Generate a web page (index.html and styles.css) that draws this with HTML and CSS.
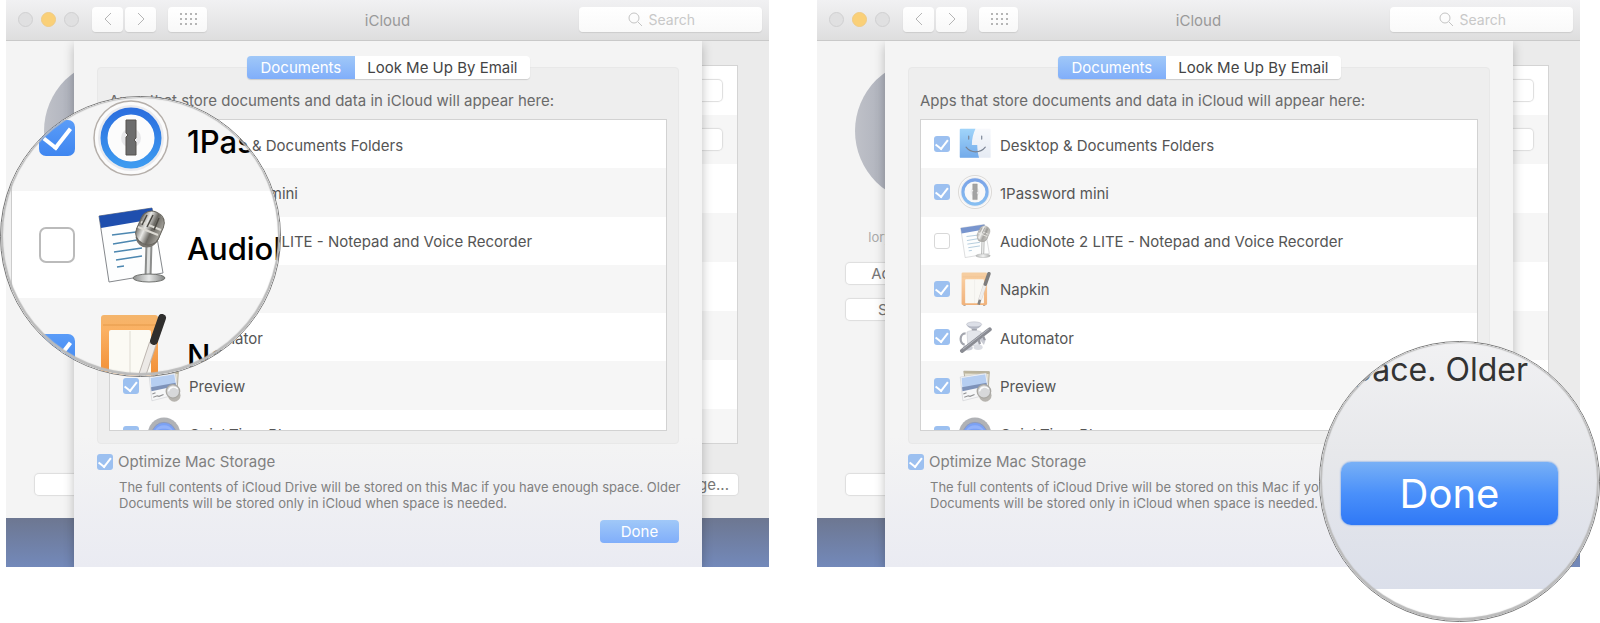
FILE: index.html
```html
<!DOCTYPE html>
<html lang="en">

<head>
    <meta charset="UTF-8">
    <title>iCloud Drive options</title>
    <link rel="stylesheet" href="styles.css">
</head>

<body>
    <svg class="sprite" aria-hidden="true">
        <defs>
            <linearGradient id="g-finder" x1="0" y1="0" x2="0" y2="1">
                <stop offset="0" stop-color="#63b9f7" />
                <stop offset="1" stop-color="#1673dd" />
            </linearGradient>
            <linearGradient id="g-face" x1="0" y1="0" x2="0" y2="1">
                <stop offset="0" stop-color="#f3f6fb" />
                <stop offset="1" stop-color="#d5deed" />
            </linearGradient>
            <linearGradient id="g-ring" x1="0" y1="0" x2="0" y2="1">
                <stop offset="0" stop-color="#2b6fdf" />
                <stop offset="1" stop-color="#3d9af0" />
            </linearGradient>
            <linearGradient id="g-metal" x1="0" y1="0" x2="1" y2="0">
                <stop offset="0" stop-color="#77756f" />
                <stop offset=".3" stop-color="#e9e9e6" />
                <stop offset=".6" stop-color="#6a6862" />
                <stop offset="1" stop-color="#a5a39c" />
            </linearGradient>
            <linearGradient id="g-stand" x1="0" y1="0" x2="1" y2="0">
                <stop offset="0" stop-color="#8d8f8e" />
                <stop offset=".5" stop-color="#e6e8e7" />
                <stop offset="1" stop-color="#7f8180" />
            </linearGradient>
            <linearGradient id="g-napkin" x1="0" y1="0" x2="0" y2="1">
                <stop offset="0" stop-color="#f4b56c" />
                <stop offset=".2" stop-color="#fbb163" />
                <stop offset="1" stop-color="#ee8529" />
            </linearGradient>
        </defs>
        <symbol id="finder" viewBox="0 0 76 76">
            <rect x="4" y="4" width="69" height="65" rx="2" fill="url(#g-face)" />
            <path d="M6 4H39C34 15 31 27 31 40H43C43 50 45 60 47 69H6a2 2 0 0 1-2-2V6a2 2 0 0 1 2-2z" fill="url(#g-finder)" />
            <path d="M24 20v7M53 20v7M18 45C29 59 50 59 61 45" fill="none" stroke="#20304a" stroke-width="2.5" stroke-linecap="round" />
        </symbol>
        <symbol id="onepassword" viewBox="0 0 76 76">
            <circle cx="38" cy="38" r="37" fill="#fbfbfb" stroke="#b5afaa" stroke-width="1.5" />
            <circle cx="38" cy="38" r="33" fill="#e9eaee" />
            <circle cx="38" cy="38" r="27" fill="#fcfcfc" stroke="url(#g-ring)" stroke-width="7" />
            <circle cx="38" cy="38" r="10" fill="#e8e8ea" />
            <path d="M33 20h10v18l-2 2 2 2v13H33V37l2-2-2-2z" fill="#6d6d6d" stroke="#57534f" />
        </symbol>
        <symbol id="audionote" viewBox="0 0 76 76">
            <path d="M6 9 59 1 70 66 16 75z" fill="#fdfefe" stroke="#85888c" />
            <path d="M6 9 59 1 61 12 8 21z" fill="#1f4fae" />
            <path d="M19 28l24-3M20 37l24-4M21 45l28-4M23 53l26-4M24 60l7-1" stroke="#4c87b0" stroke-width="1.5" fill="none" />
            <path d="M56 36l-1 34" stroke="#8b8d8c" stroke-width="7" />
            <path d="M56 36l-1 34" stroke="#dfe1e0" stroke-width="3" />
            <ellipse cx="56" cy="71" rx="16" ry="4" fill="url(#g-stand)" stroke="#6f716e" />
            <path d="M44 30c2 12 17 12 21 0l5-18" fill="#c9c9c5" stroke="#77756f" stroke-width="3" />
            <rect x="45" y="4" width="24" height="34" rx="11" fill="url(#g-metal)" stroke="#66645d" transform="rotate(24 57 21)" />
            <path d="M45 20l20 8M48 15l20 8" stroke="#dcdad3" stroke-width="2" />
            <path d="M54 8l-5 10M60 8l-6 12M66 11l-5 12" stroke="#4b4943" stroke-width="1.5" />
        </symbol>
        <symbol id="napkin" viewBox="0 0 76 76">
            <path d="M12 72v4h5v-4M56 72v4h5v-4" fill="#8d7a69" />
            <rect x="8" y="1" width="57" height="73" rx="3" fill="url(#g-napkin)" />
            <path d="M10 11h53" stroke="#e59a4a" />
            <rect x="16" y="16" width="42" height="54" rx="2" fill="#fbfaf4" />
            <path d="M37 17v52" stroke="#dedbd2" />
            <path d="M60 29 49 62" stroke="#bdb6b0" stroke-width="8" />
            <path d="M60 29 49 62" stroke="#ece9e6" stroke-width="6" />
            <path d="M69 4 61 27" stroke="#2f2e2d" stroke-width="8" stroke-linecap="round" />
            <path d="M49 62 46 73" stroke="#3a3836" stroke-width="6" />
        </symbol>
        <symbol id="automator" viewBox="0 0 76 76">
            <path d="M17 30C2 30 3 54 15 55" fill="none" stroke="#666a78" stroke-width="5" />
            <path d="M30 19h13l-2 6h-9z" fill="#626675" />
            <ellipse cx="36" cy="10" rx="17" ry="6" fill="#c5cad8" stroke="#7f8493" />
            <path d="M20 11c4 12 28 12 32 0-6 5-26 5-32 0z" fill="#838a9d" />
            <path d="M20 27c8-5 24-5 32 0l-4 30H22z" fill="#d3d6df" stroke="#8a8e9b" />
            <path d="M50 30l12 14-4 12-9-12z" fill="#a4a8b5" />
            <ellipse cx="22" cy="62" rx="11" ry="6" fill="#a9adba" />
            <ellipse cx="45" cy="61" rx="10" ry="6" fill="#c3c6d0" />
            <path d="M9 69 71 21" stroke="#3d404c" stroke-width="9" stroke-linecap="round" />
            <path d="M11 65 69 20" stroke="#8d919f" stroke-width="2" />
            <path d="M46 44l3 10M56 36l4 9" stroke="#565967" stroke-width="5" />
        </symbol>
        <symbol id="preview" viewBox="0 0 76 76">
            <path d="M13 5 70 6 67 54 20 50z" fill="#ddd6bd" stroke="#7d7355" stroke-width="2" />
            <path d="M14 5 70 6v5L14 10z" fill="#94885f" />
            <path d="M5 18 63 9 70 56 11 71z" fill="#f7f8fa" stroke="#9b9fa8" />
            <path d="M8 20 61 12 64 32 10 44z" fill="#8db4ee" />
            <path d="M9 41 64 31 65 38 10 50z" fill="#2f5191" />
            <path d="M14 63l9-3 4 1 10-4M12 56l7-3" stroke="#4e4f53" stroke-width="2.5" fill="none" />
            <circle cx="61" cy="59" r="14" fill="#8c887f" />
            <circle cx="58" cy="50" r="15" fill="#c3c5c8" stroke="#77746c" stroke-width="3" />
            <path d="M48 50c2-10 14-13 21-5" fill="none" stroke="#fff" stroke-width="3" />
        </symbol>
        <symbol id="quicktime" viewBox="0 0 76 76">
            <circle cx="38" cy="37" r="36" fill="#7c7f86" />
            <circle cx="38" cy="39" r="27" fill="#2463ee" stroke="#4b5a80" stroke-width="2" />
            <path d="M17 32a23 23 0 0 1 42 0c-12-8-30-8-42 0z" fill="#4a80f8" />
            <circle cx="38" cy="46" r="12" fill="#dfe3ea" />
        </symbol>
        <symbol id="back" viewBox="0 0 12 16">
            <path d="M9 2 3 8l6 6" />
        </symbol>
        <symbol id="forward" viewBox="0 0 12 16">
            <path d="M3 2l6 6-6 6" />
        </symbol>
        <symbol id="grid" viewBox="0 0 18 14">
            <path d="M1 2h2M6 2h2M11 2h2M16 2h2M1 7h2M6 7h2M11 7h2M16 7h2M1 12h2M6 12h2M11 12h2M16 12h2" />
        </symbol>
        <symbol id="glass" viewBox="0 0 16 16">
            <circle cx="7" cy="7" r="5" />
            <path d="M11 11l4 4" />
        </symbol>
    </svg>

    <main class="steps">
        <section class="window">
            <header class="toolbar">
                <div class="toolbar-left">
                    <div class="lights">
                        <i></i>
                        <i class="minimize"></i>
                        <i></i>
                    </div>
                    <div class="nav">
                        <button class="tool" aria-label="Back"><svg class="arrow"><use href="#back" /></svg></button>
                        <button class="tool" aria-label="Forward"><svg class="arrow"><use href="#forward" /></svg></button>
                    </div>
                    <button class="tool tool-wide" aria-label="Show all"><svg class="dots"><use href="#grid" /></svg></button>
                </div>
                <h1>iCloud</h1>
                <label class="search">
                    <svg><use href="#glass" /></svg>
                    <input type="text" placeholder="Search" aria-label="Search">
                </label>
            </header>
            <div class="content">
                <div class="pane">
                    <div class="account">
                        <div class="avatar"></div>
                        <p>lorygil@icloud.com</p>
                        <button class="plain">Account Details</button>
                        <button class="plain">Set Up Family</button>
                        <button class="plain sign-out" aria-label="Sign out"></button>
                    </div>
                    <div class="services">
                        <div class="service-list">
                            <div><button class="plain" aria-label="Drive options"></button></div>
                            <div><button class="plain" aria-label="Photos options"></button></div>
                            <div></div>
                            <div></div>
                            <div></div>
                            <div></div>
                            <div></div>
                            <div></div>
                        </div>
                        <button class="plain">Manage...</button>
                    </div>
                </div>
                <div class="desktop"></div>
                <div class="sheet">
                    <div class="tabs">
                        <button class="tab active">Documents</button>
                        <button class="tab">Look Me Up By Email</button>
                    </div>
                    <div class="group">
                        <p>Apps that store documents and data in iCloud will appear here:</p>
                        <div class="list">
                            <ul>
                                <li><label><input type="checkbox" checked><svg class="icon"><use href="#finder" /></svg><span>Desktop &amp; Documents Folders</span></label></li>
                                <li><label><input type="checkbox" checked><svg class="icon"><use href="#onepassword" /></svg><span>1Password mini</span></label></li>
                                <li><label><input type="checkbox"><svg class="icon"><use href="#audionote" /></svg><span>AudioNote 2 LITE - Notepad and Voice Recorder</span></label></li>
                                <li><label><input type="checkbox" checked><svg class="icon"><use href="#napkin" /></svg><span>Napkin</span></label></li>
                                <li><label><input type="checkbox" checked><svg class="icon"><use href="#automator" /></svg><span>Automator</span></label></li>
                                <li><label><input type="checkbox" checked><svg class="icon"><use href="#preview" /></svg><span>Preview</span></label></li>
                                <li><label><input type="checkbox" checked><svg class="icon"><use href="#quicktime" /></svg><span>QuickTime Player</span></label></li>
                            </ul>
                        </div>
                    </div>
                    <label class="optimize"><input type="checkbox" checked>Optimize Mac Storage</label>
                    <p class="hint">The full contents of iCloud Drive will be stored on this Mac if you have enough space. Older<br>Documents will be stored only in iCloud when space is needed.</p>
                    <button class="done">Done</button>
                </div>
            </div>
            <div class="loupe loupe-apps">
                <ul>
                    <li><label><input type="checkbox" checked><svg class="icon"><use href="#onepassword" /></svg><span>1Password</span></label></li>
                    <li><label><input type="checkbox"><svg class="icon"><use href="#audionote" /></svg><span>AudioNote</span></label></li>
                    <li><label><input type="checkbox" checked><svg class="icon"><use href="#napkin" /></svg><span>Napkin</span></label></li>
                </ul>
            </div>
        </section>

        <section class="window">
            <header class="toolbar">
                <div class="toolbar-left">
                    <div class="lights">
                        <i></i>
                        <i class="minimize"></i>
                        <i></i>
                    </div>
                    <div class="nav">
                        <button class="tool" aria-label="Back"><svg class="arrow"><use href="#back" /></svg></button>
                        <button class="tool" aria-label="Forward"><svg class="arrow"><use href="#forward" /></svg></button>
                    </div>
                    <button class="tool tool-wide" aria-label="Show all"><svg class="dots"><use href="#grid" /></svg></button>
                </div>
                <h1>iCloud</h1>
                <label class="search">
                    <svg><use href="#glass" /></svg>
                    <input type="text" placeholder="Search" aria-label="Search">
                </label>
            </header>
            <div class="content">
                <div class="pane">
                    <div class="account">
                        <div class="avatar"></div>
                        <p>lorygil@icloud.com</p>
                        <button class="plain">Account Details</button>
                        <button class="plain">Set Up Family</button>
                        <button class="plain sign-out" aria-label="Sign out"></button>
                    </div>
                    <div class="services">
                        <div class="service-list">
                            <div><button class="plain" aria-label="Drive options"></button></div>
                            <div><button class="plain" aria-label="Photos options"></button></div>
                            <div></div>
                            <div></div>
                            <div></div>
                            <div></div>
                            <div></div>
                            <div></div>
                        </div>
                        <button class="plain">Manage...</button>
                    </div>
                </div>
                <div class="desktop"></div>
                <div class="sheet">
                    <div class="tabs">
                        <button class="tab active">Documents</button>
                        <button class="tab">Look Me Up By Email</button>
                    </div>
                    <div class="group">
                        <p>Apps that store documents and data in iCloud will appear here:</p>
                        <div class="list">
                            <ul>
                                <li><label><input type="checkbox" checked><svg class="icon"><use href="#finder" /></svg><span>Desktop &amp; Documents Folders</span></label></li>
                                <li><label><input type="checkbox" checked><svg class="icon"><use href="#onepassword" /></svg><span>1Password mini</span></label></li>
                                <li><label><input type="checkbox"><svg class="icon"><use href="#audionote" /></svg><span>AudioNote 2 LITE - Notepad and Voice Recorder</span></label></li>
                                <li><label><input type="checkbox" checked><svg class="icon"><use href="#napkin" /></svg><span>Napkin</span></label></li>
                                <li><label><input type="checkbox" checked><svg class="icon"><use href="#automator" /></svg><span>Automator</span></label></li>
                                <li><label><input type="checkbox" checked><svg class="icon"><use href="#preview" /></svg><span>Preview</span></label></li>
                                <li><label><input type="checkbox" checked><svg class="icon"><use href="#quicktime" /></svg><span>QuickTime Player</span></label></li>
                            </ul>
                        </div>
                    </div>
                    <label class="optimize"><input type="checkbox" checked>Optimize Mac Storage</label>
                    <p class="hint">The full contents of iCloud Drive will be stored on this Mac if you have enough space. Older<br>Documents will be stored only in iCloud when space is needed.</p>
                    <button class="done">Done</button>
                </div>
            </div>
            <div class="loupe loupe-done">
                <div class="loupe-sheet">
                    <p>space. Older</p>
                    <button class="done">Done</button>
                </div>
            </div>
        </section>
    </main>
</body>

</html>
```
FILE: styles.css
```css
* {
    box-sizing: border-box;
}

body {
    margin: 0;
    background: #fff;
    color: #555;
    font: 15px/20px Inter, "Liberation Sans", sans-serif;
}

h1,
p,
ul {
    margin: 0;
    padding: 0;
}

ul {
    list-style: none;
}

button {
    border: 0;
    padding: 0;
    font: inherit;
}

.sprite {
    position: absolute;
    width: 0;
    height: 0;
}

.steps {
    display: flex;
    gap: 48px;
    padding: 0 20px 56px 6px;
    overflow: hidden;
}

.window {
    flex: 1;
    min-width: 0;
    position: relative;
}

/* toolbar */

.toolbar {
    display: grid;
    grid-template-columns: 1fr auto 1fr;
    align-items: center;
    height: 41px;
    padding: 0 7px 2px 12px;
    background: linear-gradient(#f1f1f3, #e6e6e7 60%, #dedede);
    border-bottom: 1px solid #c9c9c9;
}

.toolbar h1 {
    padding: 4px 5px 0 0;
    color: #999;
    font-size: 15px;
    font-weight: 400;
}

.toolbar-left,
.lights,
.nav {
    display: flex;
    align-items: center;
}

.toolbar-left {
    gap: 12px;
}

.lights {
    gap: 8px;
    padding-right: 1px;
}

.lights i {
    width: 15px;
    height: 15px;
    border: 1px solid #d0d0d1;
    border-radius: 50%;
    background: #e0e0e1;
}

.lights .minimize {
    background: #fad078;
    border-color: #f0cb83;
}

.nav {
    gap: 2px;
}

.tool {
    display: grid;
    place-items: center;
    width: 31px;
    height: 25px;
    border-radius: 4px;
    background: linear-gradient(#fff, #f8f8f8);
    box-shadow: 0 1px 1px #ccc;
}

.tool-wide {
    width: 39px;
}

.tool svg,
.search svg {
    fill: none;
    stroke: #b5b5b5;
}

.arrow {
    width: 12px;
    height: 16px;
}

.dots {
    width: 18px;
    height: 14px;
    stroke-width: 2px;
}

.search {
    display: flex;
    align-items: center;
    justify-content: center;
    gap: 6px;
    justify-self: end;
    width: 183px;
    height: 25px;
    border-radius: 4px;
    background: linear-gradient(#fff, #f9f9f9);
    box-shadow: 0 1px 1px #ccc;
}

.search svg {
    width: 16px;
    height: 16px;
    stroke: #c4c4c4;
}

.search input {
    width: 66px;
    border: 0;
    padding: 2px 0 0;
    background: none;
    font: inherit;
    font-size: 14px;
}

.search input::placeholder {
    color: #c8c8c8;
}

/* preference pane behind the sheet */

.content {
    display: grid;
    grid-template: 1fr 49px / 100%;
}

.pane {
    grid-area: 1 / 1;
    display: flex;
    justify-content: space-between;
    padding: 24px 31px 23px 29px;
    background: linear-gradient(90deg, #f4f4f4 50%, #ebebeb 50%);
}

.desktop {
    grid-area: 2 / 1;
    background: linear-gradient(#6d7791, #7389ba);
}

.account {
    display: flex;
    flex-direction: column;
    gap: 15px;
    width: 162px;
}

.avatar {
    flex: none;
    width: 144px;
    height: 144px;
    margin: -6px 9px 9px;
    border-radius: 50%;
    background: linear-gradient(90deg, #bfc1c8, #a0a5b2 40%);
}

.account p {
    margin-bottom: 1px;
    color: #aaa;
    font-size: 13px;
    text-align: center;
}

.plain {
    height: 21px;
    border-radius: 4px;
    background: #fff;
    box-shadow: 0 0 1px 1px #ddd;
    color: #777;
    font-size: 15px;
    line-height: 20px;
}

.sign-out {
    margin-top: auto;
}

.services {
    display: flex;
    flex-direction: column;
    justify-content: space-between;
    align-items: flex-end;
    width: 480px;
}

.service-list {
    width: 100%;
    height: 379px;
    overflow: hidden;
    border: 1px solid #d4d4d4;
    background: #fff;
}

.service-list div {
    display: flex;
    align-items: center;
    justify-content: flex-end;
    height: 49px;
    padding-right: 15px;
}

.service-list div:nth-child(even) {
    background: #f6f6f6;
}

.service-list .plain {
    width: 80px;
}

.services > .plain {
    padding: 0 9px;
}

/* sheet */

.sheet {
    grid-area: 1 / 1 / 3 / 2;
    position: relative;
    display: flex;
    flex-direction: column;
    margin: 0 67px 0 68px;
    padding: 15px 23px 24px;
    background: linear-gradient(#f4f4f4, #f4f4f4 75%, #eaebf2);
    box-shadow: 0 4px 10px rgba(0, 0, 0, .25);
    clip-path: inset(0 -20px);
}

.tabs {
    position: relative;
    display: flex;
    align-self: center;
    margin-bottom: -12px;
    border-radius: 4px;
    box-shadow: 0 1px 1px #ccc;
}

.tab {
    height: 23px;
    padding: 0 12px;
    border-radius: 0 4px 4px 0;
    background: #fff;
    color: #444;
}

.tab.active {
    padding: 0 14px;
    border-radius: 4px 0 0 4px;
    background: linear-gradient(#a0c8f8, #80aefa);
    color: #fff;
}

.group {
    padding: 23px 11px 12px;
    border: 1px solid #e8e8e8;
    border-radius: 4px;
    background: #eee;
}

.group p {
    margin-bottom: 8px;
    color: #6a6a6a;
}

.list {
    height: 312px;
    overflow: hidden;
    border: 1px solid #d2d2d2;
    background: #fff;
}

.list ul {
    display: grid;
    grid-template-rows: repeat(7, 1fr);
    height: 338px;
}

.list li:nth-child(even) {
    background: #f6f6f6;
}

.list label {
    display: flex;
    align-items: center;
    gap: 8px;
    height: 100%;
    padding-left: 13px;
}

.list span {
    padding-top: 3px;
}

.icon {
    flex: none;
    width: 34px;
    height: 34px;
}

.list .icon {
    opacity: .6;
}

input[type=checkbox] {
    appearance: none;
    flex: none;
    display: grid;
    place-items: center;
    width: 16px;
    height: 16px;
    margin: 0;
    border: 1px solid #d8d8d8;
    border-radius: 3px;
    background: #fff;
}

input[type=checkbox]:checked {
    border: 0;
    background: #9cc0f0;
}

input[type=checkbox]:checked::after {
    content: "";
    width: 35%;
    height: 60%;
    margin-top: -15%;
    border: solid #fff;
    border-width: 0 2px 2px 0;
    transform: rotate(38deg);
}

.optimize {
    display: flex;
    align-items: center;
    gap: 5px;
    margin-top: 9px;
    color: #808080;
    line-height: 18px;
}

.hint {
    margin-top: 8px;
    padding-left: 22px;
    color: #808080;
    font-size: 13px;
    line-height: 16px;
    white-space: nowrap;
}

.done {
    align-self: flex-end;
    width: 79px;
    height: 23px;
    margin-top: 9px;
    border-radius: 4px;
    background: linear-gradient(#a0c8f8, #80aefa);
    color: #fff;
}

/* magnifiers */

.loupe {
    position: absolute;
    width: 281px;
    height: 281px;
    overflow: hidden;
    border: 1px solid #777;
    border-radius: 50%;
    background: #fff;
}

.loupe::after {
    content: "";
    position: absolute;
    inset: 0;
    border-radius: 50%;
    box-shadow: inset 0 -1px 1px 2px #bbb;
}

.loupe-apps {
    top: 96px;
    left: -6px;
    padding-left: 10px;
    background: #f0f0f0;
}

.loupe-apps ul {
    margin-top: -13px;
    border-left: 1px solid #ccc;
}

.loupe-apps li {
    height: 107px;
    background: #f5f5f5;
}

.loupe-apps li:nth-child(even) {
    background: #fff;
}

.loupe-apps label {
    display: flex;
    align-items: center;
    gap: 18px;
    height: 100%;
    padding-left: 27px;
    color: #000;
    font-size: 31px;
    font-weight: 500;
}

.loupe-apps span {
    padding-top: 8px;
}

.loupe-apps .icon {
    width: 76px;
    height: 76px;
}

.loupe-apps input[type=checkbox] {
    width: 36px;
    height: 36px;
    border: 2px solid #bbb;
    border-radius: 7px;
}

.loupe-apps input[type=checkbox]:checked {
    border: 0;
    background: linear-gradient(#5a9cf8, #3f86f0);
}

.loupe-apps input[type=checkbox]:checked::after {
    border-width: 0 4px 4px 0;
}

.loupe-done {
    top: 341px;
    right: -20px;
}

.loupe-sheet {
    height: 247px;
    padding: 8px 41px 0 21px;
    background: linear-gradient(#f1f1f3, #e7e8eb 45%, #dbdfea);
}

.loupe-sheet p {
    display: flex;
    justify-content: flex-end;
    padding-right: 30px;
    color: #333;
    font-size: 32px;
    line-height: 40px;
    white-space: nowrap;
}

.loupe-sheet .done {
    display: block;
    width: 100%;
    height: 63px;
    margin-top: 72px;
    border-radius: 10px;
    background: linear-gradient(#78b0f6, #4a90fa 50%, #2f78f6);
    box-shadow: 0 0 2px #3f7fe0;
    font-size: 40px;
}
```
